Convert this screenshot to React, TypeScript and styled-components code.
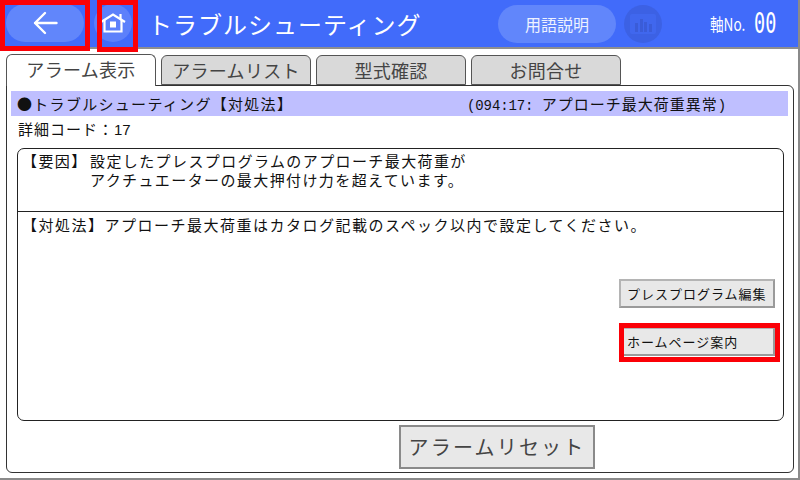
import React from 'react';
import styled, { createGlobalStyle } from 'styled-components';

const GlobalStyle = createGlobalStyle`
  html, body {
    margin: 0;
    padding: 0;
    background: #fff;
  }
  body {
    font-family: "Noto Sans CJK JP", "Liberation Sans", sans-serif;
  }
`;

const tabs = ['アラーム表示', 'アラームリスト', '型式確認', 'お問合せ'];

const App = () => {
  return (
    <>
      <GlobalStyle />
      <Screen>
        <Header>
          <BackWrap>
            <BackButton>
              <svg width="25" height="24" viewBox="0 0 25 24" fill="none" stroke="#fff" strokeWidth="2.4" strokeLinecap="round" strokeLinejoin="round">
                <path d="M23.5 12H2M12 2 2 12l10 10" />
              </svg>
            </BackButton>
            <RedFrame />
          </BackWrap>
          <HomeWrap>
            <HomeButton>
              <svg width="26" height="20" viewBox="0 0 26 20" fill="none" stroke="#fff" strokeWidth="2.2">
                <path d="M1 9 13 1.5 25 9" />
                <path d="M4.5 7V18.5H21.5V7" />
                <path d="M20.5 1v5" />
                <rect x="10.5" y="9" width="5" height="5" fill="#fff" strokeWidth="1" />
              </svg>
            </HomeButton>
            <RedFrame />
          </HomeWrap>
          <Title>トラブルシューティング</Title>
          <GlossaryButton>用語説明</GlossaryButton>
          <ChartButton>
            <svg width="26" height="20" viewBox="0 0 26 20">
              <rect x="0" y="0" width="26" height="20" rx="2" fill="#4067ee" />
              <rect x="5" y="9" width="3" height="9" fill="#3a5cd8" />
              <rect x="10" y="5" width="3" height="13" fill="#3a5cd8" />
              <rect x="14" y="8" width="3" height="10" fill="#3a5cd8" />
              <rect x="19" y="10" width="3" height="8" fill="#3a5cd8" />
            </svg>
          </ChartButton>
          <AxisLabel>軸No.</AxisLabel>
          <AxisValue>00</AxisValue>
        </Header>

        <TabRow>
          {tabs.map((tab, i) => (
            <Tab key={tab} $active={i === 0}>{tab}</Tab>
          ))}
        </TabRow>

        <Panel>
          <SectionBar>
            <BarTitle>●トラブルシューティング【対処法】</BarTitle>
            <span>
              <Mono>(094:17: </Mono>アプローチ最大荷重異常<Mono>)</Mono>
            </span>
          </SectionBar>
          <DetailCode>詳細コード：<DetailNumber>17</DetailNumber></DetailCode>

          <InfoBox>
            <CauseArea>
              <CauseLabel>【要因】</CauseLabel>
              <div>
                設定したプレスプログラムのアプローチ最大荷重が<br />
                アクチュエーターの最大押付け力を超えています。
              </div>
            </CauseArea>
            <RemedyArea>
              <RemedyText>【対処法】アプローチ最大荷重はカタログ記載のスペック以内で設定してください。</RemedyText>
              <SideButtons>
                <SideButton>プレスプログラム編集</SideButton>
                <HomepageWrap>
                  <SideButton>ホームページ案内</SideButton>
                  <RedFrame />
                </HomepageWrap>
              </SideButtons>
            </RemedyArea>
          </InfoBox>

          <ResetRow>
            <ResetButton>アラームリセット</ResetButton>
          </ResetRow>
        </Panel>
      </Screen>
    </>
  );
};

const Screen = styled.div`
  width: 800px;
  height: 480px;
  overflow: hidden;
  box-sizing: border-box;
  border-right: 2px solid #8a8a8a;
  border-bottom: 2px solid #8a8a8a;
  background: #fff;
  color: #111;
`;

const Header = styled.header`
  box-sizing: border-box;
  height: 49px;
  background: #416bfa;
  border-bottom: 2px solid #8f8f8f;
  display: flex;
  align-items: center;
  position: relative;
`;

const RedFrame = styled.div`
  position: absolute;
  inset: 0;
  border: 5px solid #fb0007;
  box-sizing: border-box;
  pointer-events: none;
`;

const BackWrap = styled.div`
  position: relative;
  width: 90px;
  height: 51px;
  flex: none;
  align-self: flex-start;
  display: flex;
  align-items: flex-start;
  justify-content: center;
  margin-right: 7px;
  z-index: 1;
`;

const BackButton = styled.div`
  width: 78px;
  height: 38px;
  margin-top: 4px;
  border-radius: 19px;
  background: #6186fb;
  display: flex;
  align-items: center;
  justify-content: center;
`;

const HomeWrap = styled.div`
  position: relative;
  width: 41px;
  height: 52px;
  flex: none;
  align-self: flex-start;
  display: flex;
  align-items: flex-start;
  justify-content: flex-start;
  z-index: 1;
`;

const HomeButton = styled.div`
  width: 38px;
  height: 38px;
  margin: 4px 0 0 -3px;
  border-radius: 50%;
  background: #5c80fb;
  display: flex;
  align-items: center;
  justify-content: center;
  flex: none;
`;

const Title = styled.h1`
  margin: 0 0 1px 10px;
  font-size: 24px;
  font-weight: 400;
  color: #fff;
  letter-spacing: 1px;
  white-space: nowrap;
  width: 350px;
  flex: none;
`;

const GlossaryButton = styled.div`
  width: 118px;
  height: 38px;
  border-radius: 19px;
  background: #6186fb;
  color: #eef2ff;
  font-size: 16px;
  display: flex;
  align-items: center;
  justify-content: center;
  flex: none;
`;

const ChartButton = styled.div`
  width: 38px;
  height: 38px;
  margin-left: 8px;
  border-radius: 50%;
  background: #3c61e4;
  display: flex;
  align-items: center;
  justify-content: center;
  flex: none;
`;

const AxisLabel = styled.span`
  margin-left: 48px;
  width: 44px;
  flex: none;
  color: #fff;
  font-size: 17px;
  white-space: nowrap;
  transform: scaleX(0.8);
  transform-origin: left center;
`;

const AxisValue = styled.span`
  color: #fff;
  font-family: "DejaVu Sans Mono", monospace;
  font-size: 28px;
  white-space: nowrap;
  transform: scaleX(0.66);
  transform-origin: left center;
`;

const TabRow = styled.div`
  display: flex;
  align-items: flex-end;
  height: 36px;
  padding-left: 6px;
  gap: 5px;
`;

const Tab = styled.div<{ $active: boolean }>`
  box-sizing: border-box;
  width: 150px;
  height: ${(p) => (p.$active ? 32 : 30)}px;
  margin-bottom: ${(p) => (p.$active ? -1 : 0)}px;
  position: relative;
  z-index: ${(p) => (p.$active ? 1 : 0)};
  border: 1px solid #555;
  border-bottom: ${(p) => (p.$active ? 'none' : '1px solid #555')};
  border-radius: 6px 6px 0 0;
  background: ${(p) => (p.$active ? '#fff' : '#d9d9d9')};
  color: #444;
  font-size: 18px;
  line-height: 28px;
  text-align: center;
  letter-spacing: 0.3px;
`;

const Panel = styled.main`
  box-sizing: border-box;
  width: 788px;
  height: 388px;
  margin-left: 6px;
  padding: 5px 5px 0 4px;
  border: 1px solid #333;
  border-radius: 0 6px 6px 6px;
  background: #fff;
`;

const SectionBar = styled.div`
  height: 25px;
  padding-left: 6px;
  background: #bfbfff;
  display: flex;
  align-items: center;
  font-size: 15px;
  color: #111;
  white-space: nowrap;
  letter-spacing: 1px;
`;

const BarTitle = styled.span`
  width: 450px;
  flex: none;
  letter-spacing: 1.3px;
`;

const Mono = styled.span`
  font-family: "Liberation Mono", monospace;
  font-size: 14px;
  letter-spacing: -0.1px;
  white-space: pre;
`;

const DetailCode = styled.div`
  margin: 2px 0 0 7px;
  height: 22px;
  line-height: 22px;
  font-size: 15px;
  letter-spacing: 1px;
`;

const DetailNumber = styled.span`
  font-family: "Liberation Sans", sans-serif;
  font-size: 15px;
  letter-spacing: 0;
`;

const InfoBox = styled.section`
  box-sizing: border-box;
  width: 767px;
  height: 273px;
  margin: 8px 0 0 6px;
  border: 1px solid #222;
  border-radius: 7px;
  display: flex;
  flex-direction: column;
`;

const CauseArea = styled.div`
  height: 60px;
  padding: 2px 0 0 4px;
  border-bottom: 1px solid #222;
  display: flex;
  font-size: 15px;
  line-height: 19px;
  letter-spacing: 1.4px;
`;

const CauseLabel = styled.div`
  width: 68px;
  flex: none;
`;

const RemedyArea = styled.div`
  flex: 1;
  display: flex;
  flex-direction: column;
  padding: 3px 8px 0 4px;
`;

const RemedyText = styled.div`
  font-size: 15px;
  line-height: 20px;
  letter-spacing: 1.5px;
`;

const SideButtons = styled.div`
  margin-top: 44px;
  display: flex;
  flex-direction: column;
  align-items: flex-end;
  gap: 16px;
`;

const SideButton = styled.div`
  box-sizing: border-box;
  width: 156px;
  height: 29px;
  padding-left: 6px;
  background: #e8e8e8;
  border: 2px solid;
  border-color: #b4b4b4 #9a9a9a #9a9a9a #b4b4b4;
  font-size: 13px;
  line-height: 25px;
  white-space: nowrap;
  letter-spacing: 1px;
`;

const HomepageWrap = styled.div`
  position: relative;
  box-sizing: border-box;
  width: 161px;
  height: 39px;
  padding: 4px 0 0 0;
  margin-top: -1px;
  margin-right: -5px;
`;

const ResetRow = styled.div`
  display: flex;
  padding: 4px 0 0 388px;
`;

const ResetButton = styled.div`
  box-sizing: border-box;
  width: 196px;
  height: 44px;
  background: #e8e8e8;
  border: 2px solid #8a8a8a;
  color: #444;
  font-size: 20px;
  line-height: 40px;
  text-align: center;
  letter-spacing: 2.2px;
  white-space: nowrap;
`;

export default App;
